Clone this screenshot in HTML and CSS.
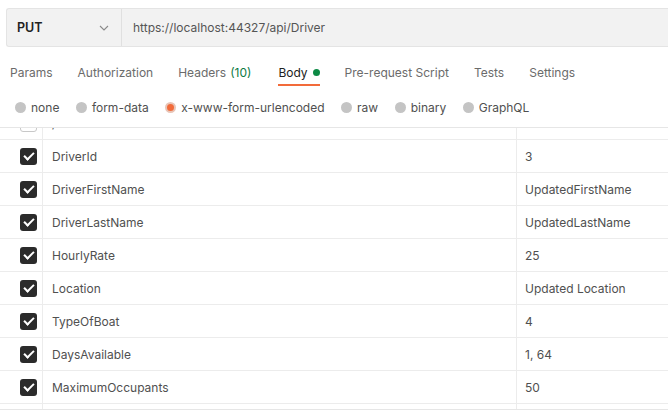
FILE: index.html
```html
<!DOCTYPE html>
<html>
<head>
<meta charset="utf-8">
<link rel="stylesheet" href="styles.css">
</head>
<body>
<div class="urlbar">
  <div class="method">
    <span class="method-name">PUT</span>
    <svg class="chev" width="10" height="6" viewBox="0 0 10 6"><path d="M1 1 L5 5 L9 1" fill="none" stroke="#8a8a8a" stroke-width="1.1"/></svg>
  </div>
  <div class="url">https://localhost:44327/api/Driver</div>
</div>
<div class="tabs">
  <span class="tab">Params</span>
  <span class="tab">Authorization</span>
  <span class="tab">Headers <span class="count">(10)</span></span>
  <span class="tab active">Body <span class="dot"></span></span>
  <span class="tab">Pre-request Script</span>
  <span class="tab">Tests</span>
  <span class="tab">Settings</span>
</div>
<div class="radios">
  <span class="radio"><span class="circle"></span>none</span>
  <span class="radio"><span class="circle"></span>form-data</span>
  <span class="radio"><span class="circle on"></span>x-www-form-urlencoded</span>
  <span class="radio"><span class="circle"></span>raw</span>
  <span class="radio"><span class="circle"></span>binary</span>
  <span class="radio"><span class="circle"></span>GraphQL</span>
</div>
<div class="table">
  <div class="rows">
    <div class="row"><div class="c1"><span class="cb off"></span></div><div class="c2">/</div><div class="c3"></div></div>
    <div class="row"><div class="c1"><span class="cb"></span></div><div class="c2">DriverId</div><div class="c3">3</div></div>
    <div class="row"><div class="c1"><span class="cb"></span></div><div class="c2">DriverFirstName</div><div class="c3">UpdatedFirstName</div></div>
    <div class="row"><div class="c1"><span class="cb"></span></div><div class="c2">DriverLastName</div><div class="c3">UpdatedLastName</div></div>
    <div class="row"><div class="c1"><span class="cb"></span></div><div class="c2">HourlyRate</div><div class="c3">25</div></div>
    <div class="row"><div class="c1"><span class="cb"></span></div><div class="c2">Location</div><div class="c3">Updated Location</div></div>
    <div class="row"><div class="c1"><span class="cb"></span></div><div class="c2">TypeOfBoat</div><div class="c3">4</div></div>
    <div class="row"><div class="c1"><span class="cb"></span></div><div class="c2">DaysAvailable</div><div class="c3">1, 64</div></div>
    <div class="row"><div class="c1"><span class="cb"></span></div><div class="c2">MaximumOccupants</div><div class="c3">50</div></div>
    <div class="row last"><div class="c1"></div><div class="c2"></div><div class="c3"></div></div>
  </div>
</div>
</body>
</html>
```
FILE: styles.css
```css
* { box-sizing: border-box; }
html, body { margin: 0; padding: 0; background: #fff; }
body {
  width: 668px; height: 418px; overflow: hidden;
  font-family: Inter, "Noto Sans", sans-serif;
  font-size: 12px; color: #505050;
}
.urlbar {
  margin: 8px 0 0 6px;
  height: 39px;
  display: flex;
  background: #f2f2f2;
  border: 1px solid #e4e4e4;
  border-right: none;
  border-radius: 3px 0 0 3px;
}
.method {
  width: 115px;
  display: flex; align-items: center; justify-content: space-between;
  padding: 0 12px 0 10px;
  border-right: 1px solid #e0e0e0;
}
.method-name { font-weight: 600; color: #212121; font-size: 12.5px; }
.url { display: flex; align-items: center; padding-left: 11px; color: #555; font-size: 12px; }
.tabs {
  display: flex; align-items: stretch;
  padding-left: 10px; height: 40px;
}
.tab {
  display: flex; align-items: center; color: #6b6b6b; font-size: 12px;
  margin-right: 25px; border-bottom: 2px solid transparent;
  padding-top: 13px; height: 39px;
}
.tab:nth-child(3) { margin-right: 27px; }
.tab .count { color: #0c7a43; margin-left: 4px; }
.tab.active { color: #212121; border-bottom-color: #f26b3a; }
.dot { width: 7px; height: 7px; background: #0c8a44; border-radius: 50%; margin-left: 5px; display: inline-block; }
.radios {
  display: flex; align-items: center; height: 41px; padding-left: 15px;
  border-bottom: 1px solid #e6e6e6;
}
.radio { display: flex; align-items: center; margin-right: 16.5px; color: #505050; }
.circle { width: 11px; height: 11px; border-radius: 50%; background: #c4c4c4; margin-right: 5px; }
.circle.on { background: #f26b3a; border: 2px solid #e8c5b8; }
.table { height: 282px; overflow: hidden; border-bottom: 1px solid #e6e6e6; }
.rows { margin-top: -21px; }
.row { display: flex; height: 33px; border-bottom: 1px solid #ececec; }
.row.last { border-bottom: none; }
.c1 { width: 43px; border-right: 1px solid #ececec; display: flex; align-items: center; padding-left: 20px; }
.c2 { width: 474px; border-right: 1px solid #ececec; display: flex; align-items: center; padding-left: 9px; color: #505050; }
.c3 { flex: 1; display: flex; align-items: center; padding-left: 8px; color: #505050; }
.cb {
  width: 17px; height: 17px; border-radius: 3px; background: #2b2b2b; position: relative;
}
.cb::after {
  content: ""; position: absolute; left: 5.5px; top: 2.5px; width: 4px; height: 8px;
  border: solid #fff; border-width: 0 2.3px 2.3px 0; transform: rotate(45deg);
}
.cb.off { background: #fff; border: 1px solid #c8c8c8; }
.cb.off::after { display: none; }
```
